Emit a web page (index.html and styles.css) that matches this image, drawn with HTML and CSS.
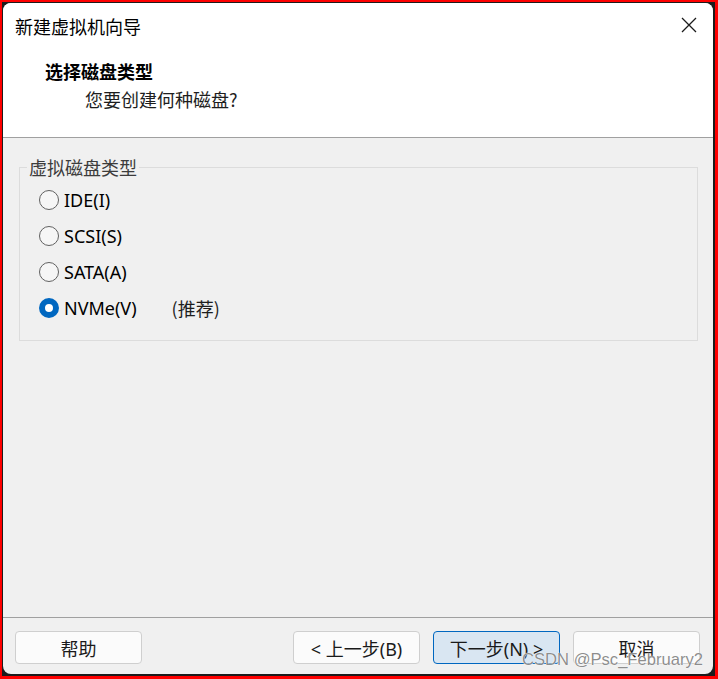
FILE: index.html
```html
<!DOCTYPE html>
<html>

<head>
	<meta charset="UTF-8">
	<title>新建虚拟机向导</title>
	<link rel="stylesheet" href="styles.css">
</head>

<body>
	<div class="frame">
		<section class="wizard">
			<div class="titlebar">
				<span class="caption">新建虚拟机向导</span>
				<svg class="close" width="16" height="16" viewBox="0 0 16 16">
					<path d="M1 1 L15 15 M15 1 L1 15" stroke="#1b1b1b" stroke-width="1.3" fill="none" />
				</svg>
			</div>
			<div class="header">
				<h1 class="title">选择磁盘类型</h1>
				<p class="sub">您要创建何种磁盘?</p>
			</div>
			<div class="content">
				<fieldset class="group">
					<legend>虚拟磁盘类型</legend>
					<ul class="options">
						<li><span class="radio"></span><span class="label">IDE(I)</span></li>
						<li><span class="radio"></span><span class="label">SCSI(S)</span></li>
						<li><span class="radio"></span><span class="label">SATA(A)</span></li>
						<li><span class="radio on"></span><span class="label">NVMe(V)</span><span class="hint">(推荐)</span></li>
					</ul>
				</fieldset>
			</div>
			<div class="footer">
				<button class="btn">帮助</button>
				<div class="nav">
					<button class="btn">&lt; 上一步(B)</button>
					<button class="btn primary">下一步(N) &gt;</button>
					<button class="btn">取消</button>
				</div>
				<span class="mark">CSDN @Psc_February2</span>
			</div>
		</section>
	</div>
</body>

</html>
```

FILE: styles.css
```css
html,
body {
	margin: 0;
	padding: 0;
}

ul {
	margin: 0;
	padding: 0;
	list-style: none;
}

body {
	font-family: "Noto Sans", "Noto Sans CJK SC", sans-serif;
	color: #000;
}

.frame {
	width: 718px;
	height: 679px;
	box-sizing: border-box;
	border: solid #f00;
	border-width: 2px 3px 3px 2px;
	padding: 1px 2px 2px 1px;
	background-color: #1c1c1c;
}

.wizard {
	position: relative;
	display: flex;
	flex-direction: column;
	height: 100%;
	border-radius: 8px;
	overflow: hidden;
	background-color: #f0f0f0;
}

.titlebar {
	display: flex;
	align-items: center;
	justify-content: space-between;
	height: 46px;
	padding: 0 16px 0 12px;
	background-color: #fff;
}

.caption {
	font-family: "Noto Sans CJK SC", sans-serif;
	font-size: 18px;
	line-height: 24px;
}

.close {
	display: block;
	margin-top: -2px;
}

.header {
	padding: 10px 0 26px 42px;
	background-color: #fff;
	border-bottom: 1px solid #a0a0a0;
}

.title {
	margin: 0;
	font-family: "Noto Sans CJK SC", sans-serif;
	font-size: 18px;
	line-height: 24px;
	font-weight: bold;
}

.sub {
	margin: 4px 0 0 40px;
	font-family: "Noto Sans CJK SC", sans-serif;
	font-size: 18px;
	line-height: 24px;
	color: #1e1e1e;
}

.content {
	flex: 1;
}

.group {
	margin: 19px 15px 0 16px;
	padding: 0 0 14px;
	border: 1px solid #dcdcdc;
}

.group legend {
	margin-left: 7px;
	padding: 0 2px;
	font-family: "Noto Sans CJK SC", sans-serif;
	font-size: 18px;
	line-height: 20px;
	color: #3c3c3c;
}

.options {
	padding: 5px 0 0 19px;
}

.options li {
	display: flex;
	align-items: center;
	height: 36px;
}

.radio {
	width: 18px;
	height: 18px;
	border: 1px solid #616161;
	border-radius: 50%;
	background-color: #f6f6f6;
	box-sizing: content-box;
}

.radio.on {
	width: 8px;
	height: 8px;
	border: 6px solid #0067c0;
	background-color: #fff;
}

.label {
	margin-left: 5px;
	font-size: 18px;
}

.hint {
	margin-left: 35px;
	font-family: "Noto Sans CJK SC", sans-serif;
	font-size: 18px;
	color: #1e1e1e;
}

.footer {
	display: flex;
	justify-content: space-between;
	height: 57px;
	padding: 13px 13px 0 12px;
	box-sizing: border-box;
	border-top: 1px solid #a0a0a0;
}

.nav {
	display: flex;
	gap: 13px;
}

.btn {
	width: 127px;
	height: 33px;
	padding: 0;
	border: 1px solid #cfcfcf;
	border-radius: 4px;
	background-color: #fbfbfb;
	font-family: "Noto Sans", "Noto Sans CJK SC", sans-serif;
	font-size: 18px;
	color: #1a1a1a;
}

.btn.primary {
	border-color: #0067c0;
	background-color: #d9e6f2;
}

.mark {
	position: absolute;
	right: 10px;
	bottom: 4px;
	font-family: "Liberation Sans", sans-serif;
	font-size: 16.6px;
	color: rgba(120, 120, 120, .85);
	text-shadow: 0 0 1px #fff, 0 0 1px #fff;
}
```
